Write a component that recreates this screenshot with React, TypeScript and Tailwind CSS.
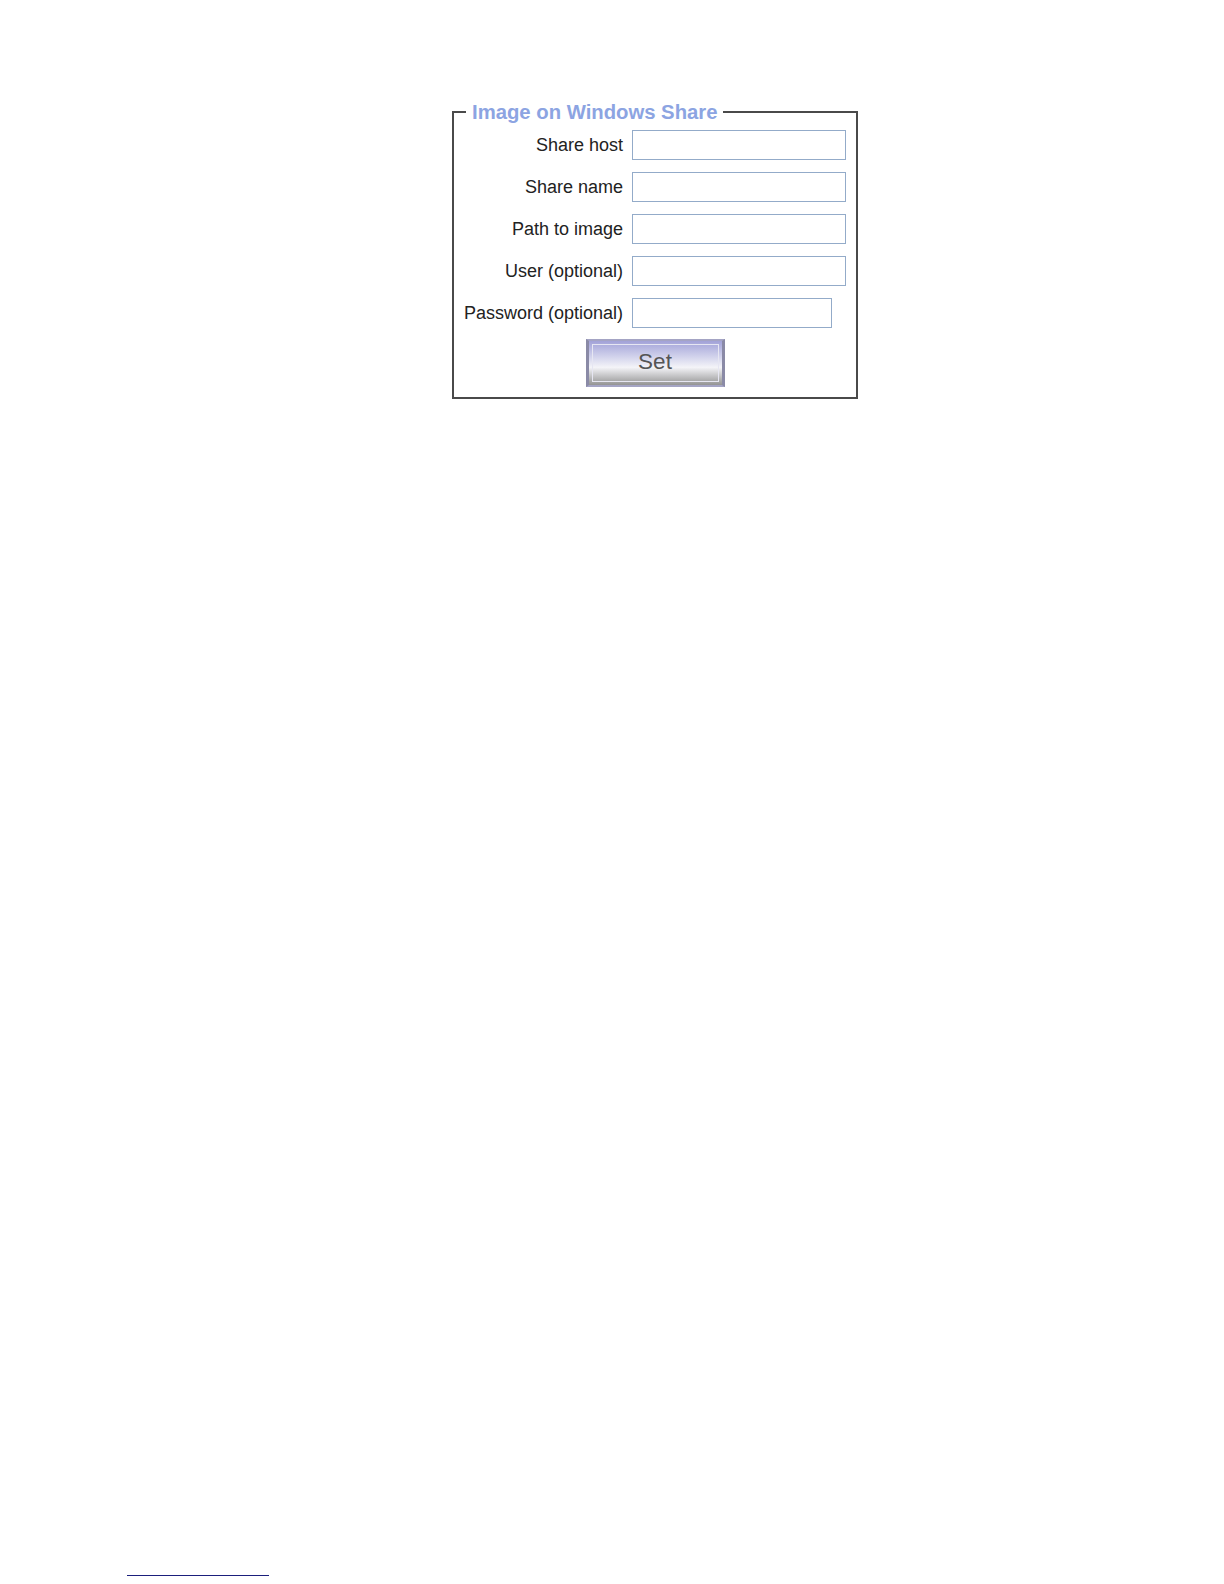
const FIELDS = [
  { label: "Share host", wide: true },
  { label: "Share name", wide: true },
  { label: "Path to image", wide: true },
  { label: "User (optional)", wide: true },
  { label: "Password (optional)", wide: false },
];

export default function App() {
  return (
    <div className="flex h-[1584px] flex-col bg-white font-['Liberation_Sans',Arial,sans-serif]">
      {/* ── FIELDSET ── */}
      <div className="pl-[452px] pt-[100px]">
        <fieldset className="w-[406px] border-2 border-[#4a4a4a] pl-[12px] pr-[10px] pb-[10px]">
          <legend className="px-[6px] text-[20.3px] font-bold leading-[24px] text-[#8ca4e2]">
            Image on Windows Share
          </legend>
          <div className="flex flex-col gap-[12px] pt-[6px]">
            {FIELDS.map((f) => (
              <div key={f.label} className="flex items-center gap-[9px] -ml-[3px]">
                <label className="w-[160px] shrink-0 whitespace-nowrap text-right text-[18px] leading-[20px] text-[#222]">
                  {f.label}
                </label>
                <input
                  type={f.label.startsWith("Password") ? "password" : "text"}
                  className={`h-[30px] border border-[#93abc9] bg-white px-1 outline-none ${
                    f.wide ? "w-[214px]" : "w-[200px]"
                  }`}
                />
              </div>
            ))}
            <div className="-mt-[1px] flex justify-center pr-[2px]">
              <button
                type="button"
                className="relative h-[48px] w-[139px] border-x-[3px] border-y-[2px] border-x-[#8a8aa6] border-y-[#a4a4c4] bg-gradient-to-b from-[#a2a2d8] via-[#f4f4f8] via-[60%] to-[#949494]"
              >
                <span className="pointer-events-none absolute inset-[3px] border border-[#e6e6f2]" />
                <span className="relative text-[22.5px] leading-none text-[#555]">Set</span>
              </button>
            </div>
          </div>
        </fieldset>
      </div>

      {/* ── FOOTNOTE RULE ── */}
      <div className="mt-auto mb-[8px] ml-[127px] h-px w-[142px] bg-[#1b1f7c]" />
    </div>
  );
}
